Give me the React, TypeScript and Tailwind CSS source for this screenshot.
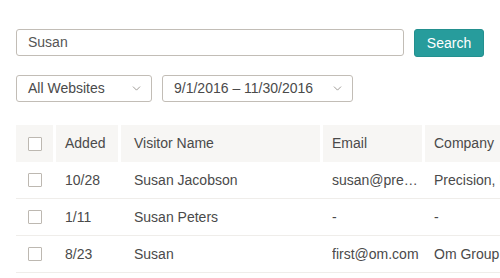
import { ChevronDown } from "lucide-react";

const rows = [
  { added: "10/28", name: "Susan Jacobson", email: "susan@precision.com", company: "Precision, Inc." },
  { added: "1/11", name: "Susan Peters", email: "-", company: "-" },
  { added: "8/23", name: "Susan", email: "first@om.com", company: "Om Group" },
];

function Box() {
  return <div className="w-[14px] h-[14px] border border-[#bdb8b1] bg-white rounded-[1px]" />;
}

function Select({ label, width }: { label: string; width: string }) {
  return (
    <div className={`${width} h-[27px] flex items-center justify-between pl-[11px] pr-[8px] border border-[#c2bdb6] rounded-[3px] bg-white text-[14px] text-[#4a4a4a]`}>
      <span>{label}</span>
      <ChevronDown className="w-[13px] h-[13px] text-[#8a8580]" strokeWidth={1.5} />
    </div>
  );
}

export default function App() {
  return (
    <div className="w-[500px] h-[278px] overflow-hidden bg-white pl-[16px] pt-[29px] font-['Liberation_Sans',Arial,sans-serif] text-[#4a4a4a]">
      <div className="flex gap-[10px]">
        <div className="w-[388px] h-[27px] flex items-center pl-[11px] border border-[#c2bdb6] rounded-[3px] text-[14px] text-[#555]">
          Susan
        </div>
        <button className="w-[70px] h-[28px] bg-[#279c9c] border border-[#23908f] rounded-[3px] text-white text-[14px]">
          Search
        </button>
      </div>

      <div className="flex gap-[10px] mt-[18px]">
        <Select label="All Websites" width="w-[136px]" />
        <Select label="9/1/2016 – 11/30/2016" width="w-[191px]" />
      </div>

      <div className="mt-[23px] w-[700px] text-[14px]">
        <div className="flex gap-[3px] h-[37px]">
          <div className="w-[37px] bg-[#f7f6f4] flex items-center pl-[12px]"><Box /></div>
          <div className="w-[62px] bg-[#f7f6f4] flex items-center pl-[9px]">Added</div>
          <div className="w-[199px] bg-[#f7f6f4] flex items-center pl-[13px]">Visitor Name</div>
          <div className="w-[99px] bg-[#f7f6f4] flex items-center pl-[9px]">Email</div>
          <div className="w-[200px] bg-[#f7f6f4] flex items-center pl-[9px]">Company</div>
        </div>
        {rows.map((r) => (
          <div key={r.added} className="flex gap-[3px] h-[37px] border-b border-[#efedea]">
            <div className="w-[37px] flex items-center pl-[12px]"><Box /></div>
            <div className="w-[62px] flex items-center pl-[9px]">{r.added}</div>
            <div className="w-[199px] flex items-center pl-[13px]">{r.name}</div>
            <div className="w-[99px] flex items-center pl-[9px] min-w-0">
              <span className="truncate">{r.email}</span>
            </div>
            <div className="w-[200px] flex items-center pl-[9px] whitespace-nowrap">{r.company}</div>
          </div>
        ))}
      </div>
    </div>
  );
}
